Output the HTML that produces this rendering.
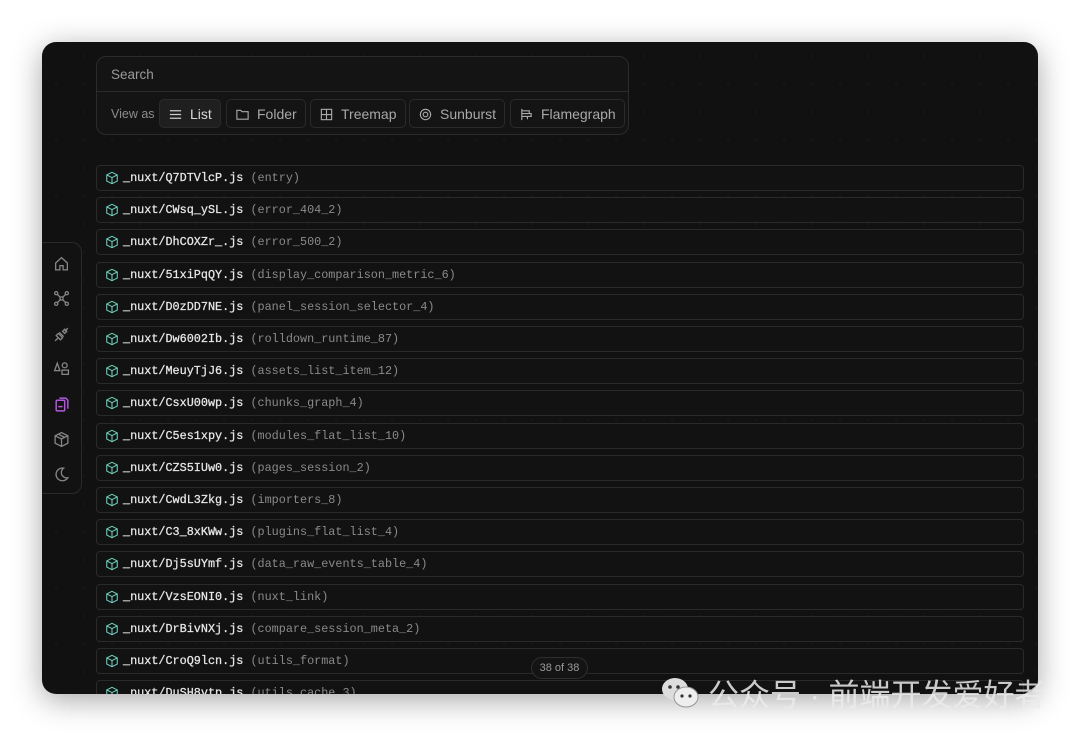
<!DOCTYPE html>
<html><head><meta charset="utf-8"><style>
*{box-sizing:border-box;margin:0;padding:0}
body{width:1080px;height:736px;background:#fff;position:relative;overflow:hidden;font-family:"Liberation Sans",sans-serif}
.win{position:absolute;left:42px;top:42px;width:996px;height:652px;background:#111;border-radius:14px;overflow:hidden;box-shadow:0 6px 30px rgba(0,0,0,.35);
background-image:radial-gradient(circle,#2a2a2a 0.6px,transparent 0.8px);background-size:28px 28px}
.search{position:absolute;left:54px;top:14px;width:533px;height:79px;border:1px solid #2b2b2b;border-radius:10px;background:#141414}
.search .in{height:35px;border-bottom:1px solid #2b2b2b;color:#9a9a9a;font-size:13.5px;padding:10px 14px}
.va{position:absolute;left:14px;top:50px;color:#8c8c8c;font-size:12.5px}
.btn{position:absolute;top:42px;height:29px;border:1px solid #2a2a2a;border-radius:5px;color:#a8a8a8;font-size:14px;padding:6px 8px 0 8px;display:flex;gap:7px}
.btn svg{width:15px;height:15px;margin-top:1px}
.btn.act{background:#1f1f1f;color:#d8d8d8}
.row{position:absolute;left:54px;width:928px;height:26px;border:1px solid #2a2a2a;border-radius:4px;background:#121212;font-family:"Liberation Mono",monospace;font-size:11.8px;color:#e8e8e8;padding:5px 0 0 26px;white-space:nowrap;-webkit-text-stroke:0.25px #e8e8e8}
.row span{color:#8a8a8a;-webkit-text-stroke:0}
.row svg{position:absolute;left:8px;top:5px;width:14px;height:14px}
.side{position:absolute;left:-1px;top:200px;width:41px;height:252px;border:1px solid #2a2a2a;border-radius:0 10px 10px 0;background:#121212}
.side svg{position:absolute;left:11px;width:17px;height:17px}
.cnt{position:absolute;left:489px;top:615px;width:57px;height:22px;border:1px solid #2e2e2e;border-radius:11px;background:#141414;color:#9a9a9a;font-size:11px;text-align:center;line-height:20px}
.wm{position:absolute;left:660px;top:670px;color:rgba(235,235,235,.85);font-size:31px;font-family:"Liberation Sans","Noto Sans CJK SC",sans-serif;display:flex;align-items:center;gap:8px;white-space:nowrap}
</style></head><body>
<div class="win">
 <div class="search"><div class="in">Search</div>
  <div class="va">View as</div>
  <div class="btn act" style="left:62px">
   <svg viewBox="0 0 16 16" fill="none" stroke="#ccc" stroke-width="1.3"><path d="M2 4h12M2 8h12M2 12h12"/></svg>List</div>
  <div class="btn" style="left:129px"><svg viewBox="0 0 16 16" fill="none" stroke="#aaa" stroke-width="1.2"><path d="M2 3.5h4l1.5 1.5H14v8H2z"/></svg>Folder</div>
  <div class="btn" style="left:213px"><svg viewBox="0 0 16 16" fill="none" stroke="#aaa" stroke-width="1.2"><rect x="2.5" y="2.5" width="11" height="11"/><path d="M8 2.5v11M2.5 8h11"/></svg>Treemap</div>
  <div class="btn" style="left:312px"><svg viewBox="0 0 16 16" fill="none" stroke="#aaa" stroke-width="1.2"><circle cx="8" cy="8" r="5.5"/><circle cx="8" cy="8" r="2.5"/></svg>Sunburst</div>
  <div class="btn" style="left:413px"><svg viewBox="0 0 16 16" fill="none" stroke="#aaa" stroke-width="1.2"><path d="M3 2v12M3 4h8v3H3M3 7h10v3H3M3 10h6v3"/></svg>Flamegraph</div>
 </div>
 <div class="side">
  <svg style="top:12px" viewBox="0 0 16 16" fill="none" stroke="#888" stroke-width="1.2"><path d="M2.5 7.5L8 2.5l5.5 5V14h-4v-4h-3v4h-4z"/></svg>
  <svg style="top:47px" viewBox="0 0 16 16" fill="none" stroke="#888" stroke-width="1.2"><circle cx="3" cy="3" r="1.5"/><circle cx="13" cy="3" r="1.5"/><circle cx="3" cy="13" r="1.5"/><circle cx="13" cy="13" r="1.5"/><circle cx="8" cy="8" r="1.5"/><path d="M4 4l3 3M12 4l-3 3M4 12l3-3M12 12l-3-3"/></svg>
  <svg style="top:83px" viewBox="0 0 16 16" fill="none" stroke="#888" stroke-width="1.2"><path d="M2 14l3-3M14 2l-3 3M5 7l4 4-2 2-4-4zM9 5l2 2 2-2-2-2zM6 6l4 4"/></svg>
  <svg style="top:117px" viewBox="0 0 16 16" fill="none" stroke="#888" stroke-width="1.2"><path d="M4 3L1.5 10h5z"/><circle cx="11" cy="5" r="2.3"/><rect x="8.5" y="9.5" width="6" height="4"/></svg>
  <svg style="top:153px" viewBox="0 0 16 16" fill="none" stroke="#b455e0" stroke-width="1.4"><rect x="3" y="4" width="8" height="10" rx="1"/><path d="M6 2h6l2 2v8M5 10h4"/></svg>
  <svg style="top:188px" viewBox="0 0 16 16" fill="none" stroke="#888" stroke-width="1.2"><path d="M8 1.5l6 3v7l-6 3-6-3v-7zM2 4.5l6 3 6-3M8 7.5v7M5 3l6 3"/></svg>
  <svg style="top:223px" viewBox="0 0 16 16" fill="none" stroke="#888" stroke-width="1.2"><path d="M10 2a6 6 0 1 0 4 9A5 5 0 0 1 10 2z"/></svg>
 </div>
 <div id="rows"></div>
 <div class="cnt">38 of 38</div>
</div>
<div class="wm"><svg width="40" height="34" viewBox="0 0 40 34"><ellipse cx="15" cy="13" rx="13" ry="11" fill="#ddd"/><ellipse cx="26" cy="21" rx="12" ry="10" fill="#eee" stroke="#999" stroke-width="1"/><circle cx="10" cy="11" r="1.8" fill="#333"/><circle cx="18" cy="11" r="1.8" fill="#333"/><circle cx="22" cy="20" r="1.6" fill="#333"/><circle cx="30" cy="20" r="1.6" fill="#333"/></svg>公众号 · 前端开发爱好者</div>
<script>
const d=[["Q7DTVlcP","entry"],["CWsq_ySL","error_404_2"],["DhCOXZr_","error_500_2"],["51xiPqQY","display_comparison_metric_6"],["D0zDD7NE","panel_session_selector_4"],["Dw6002Ib","rolldown_runtime_87"],["MeuyTjJ6","assets_list_item_12"],["CsxU00wp","chunks_graph_4"],["C5es1xpy","modules_flat_list_10"],["CZS5IUw0","pages_session_2"],["CwdL3Zkg","importers_8"],["C3_8xKWw","plugins_flat_list_4"],["Dj5sUYmf","data_raw_events_table_4"],["VzsEONI0","nuxt_link"],["DrBivNXj","compare_session_meta_2"],["CroQ9lcn","utils_format"],["DuSH8vtp","utils_cache_3"]];
const ic='<svg viewBox="0 0 16 16" fill="none" stroke="#6fd1c0" stroke-width="1.2"><path d="M8 1.5l6 3v7l-6 3-6-3v-7zM2 4.5l6 3 6-3M8 7.5v7"/></svg>';
let h='';d.forEach((r,i)=>{h+=`<div class="row" style="top:${123+i*32.2}px">${ic}_nuxt/${r[0]}.js <span>(${r[1]})</span></div>`});
document.getElementById('rows').innerHTML=h;
</script>
</body></html>
